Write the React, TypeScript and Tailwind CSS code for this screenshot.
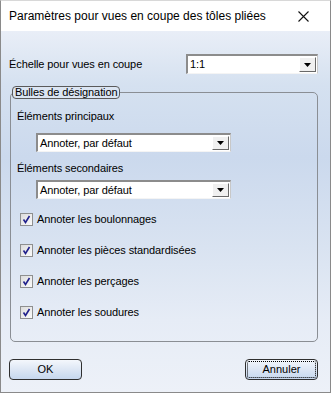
import React from "react";

const font = { fontFamily: '"Liberation Sans", Arial, sans-serif' };

function Combo({ value, className }: { value: string; className: string }) {
  return (
    <div
      className={`flex items-stretch bg-white border-t-2 border-l-2 border-t-[#8c8c8c] border-l-[#8c8c8c] border-b border-r border-b-[#f4f4f4] border-r-[#c8c8c8] ${className}`}
    >
      <div className="flex-1 flex items-center pl-[2px] text-[11px] tracking-[-0.1px] text-black leading-none">{value}</div>
      <div className="w-[17px] my-[1px] mr-[1px] bg-[#f0f0f0] border-t border-l border-t-white border-l-white border-b border-r border-b-[#696969] border-r-[#696969] flex items-center justify-center">
        <svg width="7" height="4" viewBox="0 0 7 4">
          <polygon points="0,0 7,0 3.5,4" fill="#000" />
        </svg>
      </div>
    </div>
  );
}

function Check({ label }: { label: string }) {
  return (
    <div className="flex items-center h-[14px] ml-[9px]">
      <div className="w-[13px] h-[13px] border border-[#8e8f8f] bg-[linear-gradient(135deg,#dcdcdc,#fbfbfb)] flex items-center justify-center">
        <svg width="11" height="11" viewBox="0 0 11 11">
          <path d="M2.5 5.5 L4.5 8.5 L8.5 2" fill="none" stroke="#21218c" strokeWidth="1.6" />
        </svg>
      </div>
      <span className="ml-[4px] text-[11px] tracking-[-0.1px] text-black leading-none">{label}</span>
    </div>
  );
}

export default function App() {
  return (
    <div
      className="w-[331px] h-[393px] flex flex-col border border-[#8a8a8a] border-t-[#d8d8d8] overflow-hidden"
      style={font}
    >
      <div className="h-[30px] bg-white flex items-center justify-between pl-[8px] pr-[21px] shrink-0">
        <span className="text-[12px] text-black">
          Paramètres pour vues en coupe des tôles pliées
        </span>
        <svg width="11" height="11" viewBox="0 0 11 11">
          <path d="M0.5 0.5 L10.5 10.5 M10.5 0.5 L0.5 10.5" stroke="#111" strokeWidth="1.1" />
        </svg>
      </div>
      <div className="flex-1 flex flex-col px-[8px] bg-[linear-gradient(180deg,#e9eef7_0%,#d5e1f0_15%,#cbd9ed_35%,#d9e3f1_60%,#e6ecf6_80%,#edf1f8_100%)]">
        <div className="flex items-center justify-between mt-[23px] h-[20px]">
          <span className="text-[11px] tracking-[-0.1px] text-black">Échelle pour vues en coupe</span>
          <Combo value="1:1" className="w-[132px] h-[20px] mr-[4px]" />
        </div>

        <div className="relative mt-[18px] h-[250px] ml-[1px] mr-[4px] border border-[#8a8e94] rounded-[5px]">
          <div className="absolute left-[1px] top-[-7px] h-[13px] px-[2px] flex items-center border border-[#5a5a5a] rounded-[4px] bg-[#dbe5f2] text-[11px] tracking-[-0.1px] text-black leading-none">
            Bulles de désignation
          </div>
          <div className="flex flex-col">
            <div className="mt-[16px] ml-[6px] h-[14px] flex items-center text-[11px] tracking-[-0.1px] text-black">Éléments principaux</div>
            <Combo value="Annoter, par défaut" className="mt-[10px] ml-[25px] w-[195px] h-[19px]" />
            <div className="mt-[9px] ml-[6px] h-[14px] flex items-center text-[11px] tracking-[-0.1px] text-black">Éléments secondaires</div>
            <Combo value="Annoter, par défaut" className="mt-[5px] ml-[25px] w-[195px] h-[19px]" />
            <div className="mt-[13px] flex flex-col gap-[17px]">
              <Check label="Annoter les boulonnages" />
              <Check label="Annoter les pièces standardisées" />
              <Check label="Annoter les perçages" />
              <Check label="Annoter les soudures" />
            </div>
          </div>
        </div>

        <div className="flex justify-between mt-[17px] mr-[4px]">
          <button className="w-[73px] h-[21px] rounded-[4px] border border-[#2f2f2f] bg-[linear-gradient(180deg,#f4f7fc_0%,#dfe8f5_45%,#c6d7ee_100%)] text-[11px] text-black flex items-center justify-center">
            OK
          </button>
          <button className="w-[73px] h-[21px] rounded-[4px] border border-[#2f2f2f] bg-[linear-gradient(180deg,#f4f7fc_0%,#dfe8f5_45%,#c6d7ee_100%)] text-[11px] text-black flex items-center justify-center p-[1px]">
            <span className="w-full h-full border border-dotted border-black rounded-[2px] flex items-center justify-center">
              Annuler
            </span>
          </button>
        </div>
      </div>
    </div>
  );
}
